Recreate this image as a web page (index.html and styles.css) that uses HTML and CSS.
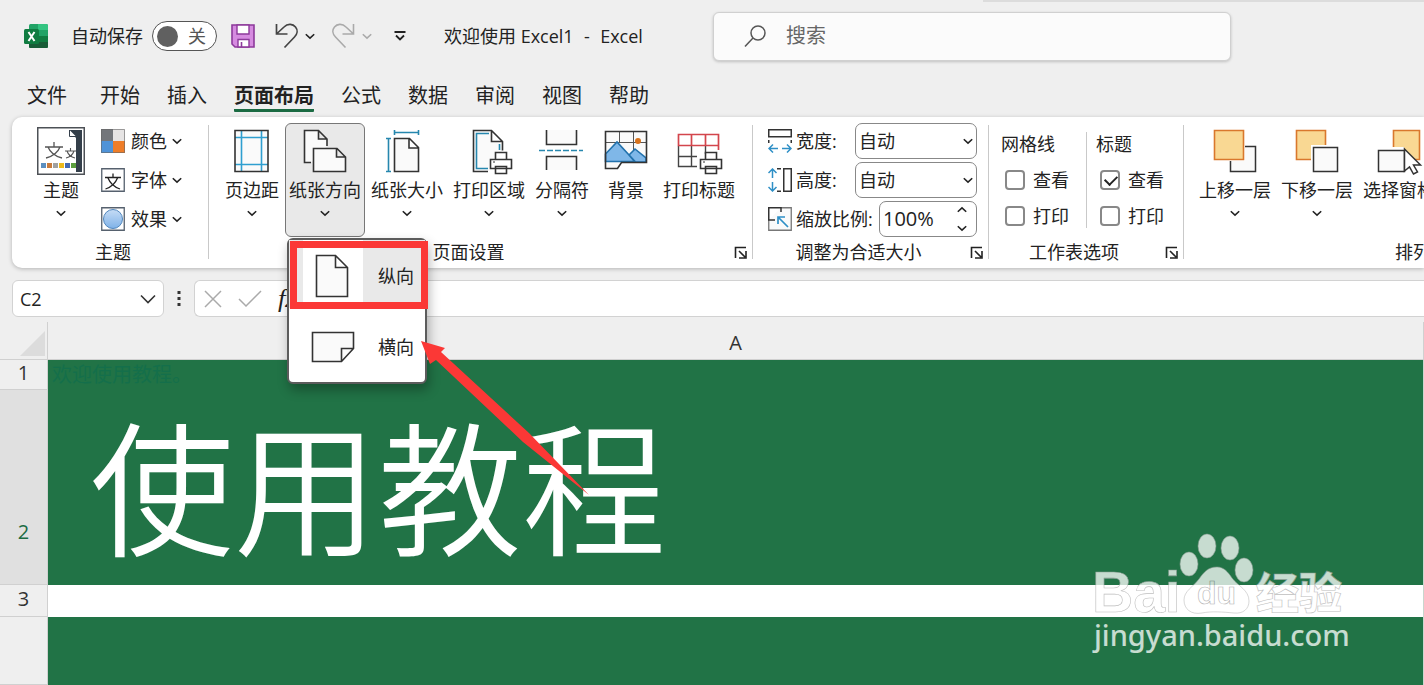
FILE: index.html
```html
<!DOCTYPE html>
<html lang="zh-CN">
<head>
  <meta charset="UTF-8">
  <meta name="viewport" content="width=device-width, initial-scale=1.0">
  <title>欢迎使用 Excel1 - Excel</title>
  <link rel="stylesheet" href="styles.css">
</head>
<body>
  <!-- shared icons -->
  <svg class="defs" aria-hidden="true">
    <symbol id="chev" viewBox="0 0 10 10"><path d="M1.5 3.500L5 6.800L8.500 3.500" fill="none" stroke="currentColor" stroke-width="1.300"/></symbol>
    <symbol id="launch" viewBox="0 0 14 14"><path d="M1.5 12V1.5H12M5 5l6 6M12 5v7H5" fill="none" stroke="#222" stroke-width="1.6"/></symbol>
    <symbol id="printer" viewBox="0 0 24 24"><path d="M6.500 8V1.500h11V8M1.500 8.500h21v9h-21zM6.500 15.500h11v7h-11z" fill="#fff" stroke="#333" stroke-width="1.600"/><path d="M4 11h2" stroke="#333"/></symbol>
  </svg>

  <header class="titlebar">
    <div class="quick">
      <svg class="logo" width="24" height="24" viewBox="0 0 24 24">
        <rect x="5" y="0" width="19" height="24" rx="1.500" fill="#21a366"/>
        <path d="M14 0h8.500a1.500 1.500 0 0 1 1.500 1.500V6H14z" fill="#33c481"/>
        <path d="M5 6h9v6H5z" fill="#107c41"/>
        <path d="M14 12h10v6H14z" fill="#107c41"/>
        <path d="M5 12h9v6h10v4.500a1.500 1.500 0 0 1-1.500 1.500h-16A1.500 1.500 0 0 1 5 22.500z" fill="#185c37"/>
        <rect x="0" y="5" width="15" height="15" rx="1.500" fill="#107c41"/>
        <path d="M4.500 8l6 9M10.500 8l-6 9" stroke="#fff" stroke-width="2"/>
      </svg>
      <span class="autosave" id="autosaveLabel">自动保存</span>
      <button class="toggle" role="switch" aria-checked="false" aria-labelledby="autosaveLabel"><i></i>关</button>
      <button class="tool" aria-label="保存">
        <svg width="24" height="24" viewBox="0 0 24 24">
          <path d="M1 1h22v22H4l-3-3z" fill="#d68be0" stroke="#8d3a9b" stroke-width="1.600"/>
          <path d="M6 1h12v9H6zM7 15.500h11V23H7z" fill="#fff" stroke="#8d3a9b" stroke-width="1.400"/>
          <path d="M10.500 18v5" stroke="#8d3a9b" stroke-width="1.600"/>
        </svg>
      </button>
      <button class="tool undo" aria-label="撤消">
        <svg width="24" height="26" viewBox="0 0 24 26"><path d="M1.500 1v10h11M2 10.500L9 4c4-4 9-3 11.500 0s2 7-1 10L9.500 24.500" fill="none" stroke="#444" stroke-width="1.700"/></svg>
        <svg width="12" height="12"><use href="#chev"/></svg>
      </button>
      <button class="tool redo" aria-label="恢复">
        <svg width="24" height="26" viewBox="0 0 24 26"><path d="M21.500 1v10h-11M21 10.500L14 4c-4-4-9-3-11.500 0s-2 7 1 10L13.500 24.500" fill="none" stroke="#aaa" stroke-width="1.600"/></svg>
        <svg width="12" height="12"><use href="#chev"/></svg>
      </button>
      <button class="tool custom" aria-label="自定义快速访问工具栏">
        <svg width="12" height="12" viewBox="0 0 12 12"><path d="M.5 2h11M2 5.500l4 4 4-4" fill="none" stroke="#222" stroke-width="1.800"/></svg>
      </button>
      <span class="doc-title">欢迎使用 Excel1 <span class="dash">&nbsp;-&nbsp;</span> Excel</span>
    </div>
    <label class="search">
      <svg width="24" height="24" viewBox="0 0 24 24"><circle cx="14" cy="9" r="7" fill="none" stroke="#555" stroke-width="1.500"/><path d="M9 14l-8 8.500" stroke="#555" stroke-width="1.500"/></svg>
      <input type="text" placeholder="搜索" aria-label="搜索">
    </label>
  </header>

  <nav class="tabs">
    <a href="#" class="file">文件</a>
    <a href="#">开始</a>
    <a href="#">插入</a>
    <a href="#" class="active">页面布局</a>
    <a href="#">公式</a>
    <a href="#">数据</a>
    <a href="#">审阅</a>
    <a href="#">视图</a>
    <a href="#">帮助</a>
  </nav>

  <section class="ribbon">
    <div class="group theme">
      <div class="items">
        <button class="big">
          <svg width="48" height="48" viewBox="0 0 48 48">
            <rect x=".75" y=".75" width="46.500" height="46.500" fill="#fff" stroke="#4d5156" stroke-width="1.500"/>
            <path d="M39 3h6v42h-6zM32 3h7v8z" fill="#343f4a"/>
            <path d="M32.500 3v6.500H39" fill="#fff" stroke="#343f4a"/>
            <path d="M8 20h18M17 15v5M11 20c2 5 6 9 14 11M23 20c-2 5-6 9-14 11" fill="none" stroke="#555" stroke-width="1.300"/>
            <path d="M28 24h11M33.500 21v3M30 24c1 3 4 6 8 7M37 24c-1 3-4 6-8 7" fill="none" stroke="#555" stroke-width="1.100"/>
            <path d="M4 36h5v5H4z" fill="#5b8fc0"/><path d="M10 36h5v5h-5z" fill="#c97b3c"/><path d="M16 36h5v5h-5z" fill="#a0a0a0"/>
            <path d="M22 36h5v5h-5z" fill="#edb91c"/><path d="M28 36h5v5h-5z" fill="#4468b3"/><path d="M34 36h5v5h-5z" fill="#5b9e3d"/>
          </svg>
          <span>主题</span>
          <svg class="chev" width="12" height="12"><use href="#chev"/></svg>
        </button>
        <div class="stack">
          <button class="small">
            <svg width="24" height="24" viewBox="0 0 24 24"><path d="M0 0h12v12H0z" fill="#73767b"/><path d="M12 0h12v12H12z" fill="#e6e4e4"/><path d="M0 12h12v12H0z" fill="#4f93d8"/><path d="M12 12h12v12H12z" fill="#ee7d28"/><path d="M.5.5h23v23H.5z" fill="none" stroke="#666" stroke-opacity=".6"/></svg>
            颜色<svg width="12" height="12"><use href="#chev"/></svg>
          </button>
          <button class="small">
            <svg width="24" height="24" viewBox="0 0 24 24"><path d="M.75.75h22.500v22.500H.75z" fill="#fff" stroke="#56616e" stroke-width="1.300"/><path d="M4 9.500h16M12 5.500v4M7 10c2 5 6 9 12 11M16.500 10c-2 5-6 9-12 11" fill="none" stroke="#222" stroke-width="1.300"/></svg>
            字体<svg width="12" height="12"><use href="#chev"/></svg>
          </button>
          <button class="small">
            <svg width="24" height="24" viewBox="0 0 24 24"><defs><linearGradient id="ball" x2="0" y2="1"><stop stop-color="#c6dcf5"/><stop offset="1" stop-color="#7fb2e8"/></linearGradient></defs><path d="M.75.75h22.500v22.500H.75z" fill="#fff" stroke="#56616e" stroke-width="1.300"/><circle cx="12" cy="12" r="9.500" fill="url(#ball)" stroke="#5187bd"/></svg>
            效果<svg width="12" height="12"><use href="#chev"/></svg>
          </button>
        </div>
      </div>
      <div class="caption"><span>主题</span></div>
    </div>
    <div class="sep"></div>

    <div class="group page">
      <div class="items">
        <button class="big">
          <svg width="48" height="48" viewBox="0 0 48 48"><path d="M7 3.500h33v41H7z" fill="#fafafa"/><path d="M13.500 4v40M33.500 4v40M7 10.500h33M7 37.500h33" stroke="#2f9fd0" stroke-width="1.600"/><path d="M7 3.500h33v41H7z" fill="none" stroke="#333" stroke-width="1.600"/></svg>
          <span>页边距</span>
          <svg class="chev" width="12" height="12"><use href="#chev"/></svg>
        </button>
        <div class="drop">
          <button class="big pressed" aria-expanded="true">
            <svg width="48" height="48" viewBox="0 0 48 48"><path d="M10 35.500H3.500v-32h14l8.500 8.500v7M17.500 3.500V12H26" fill="#fafafa" stroke="#333" stroke-width="1.600"/><path d="M12.500 21.500h23.500l8.500 8.500v14.500h-32zM35.500 21.500V30h9" fill="#fafafa" stroke="#333" stroke-width="1.600"/></svg>
            <span>纸张方向</span>
            <svg class="chev" width="12" height="12"><use href="#chev"/></svg>
          </button>
          <div class="menu">
            <button class="option hover">
              <span class="pic"><svg width="48" height="48" viewBox="0 0 48 48"><path d="M7.500 3.500h19l12 12v29h-31zM26.500 3.500v12h12" fill="#fafafa" stroke="#333" stroke-width="1.600"/></svg></span>纵向
            </button>
            <button class="option">
              <span class="pic"><svg width="48" height="48" viewBox="0 0 48 48"><path d="M3.500 9.500h41v16l-12 13h-29zM32.500 38.500v-13h12" fill="#fafafa" stroke="#333" stroke-width="1.600"/></svg></span>横向
            </button>
            <div class="mark"></div>
            <svg class="arrow" width="170" height="155" viewBox="0 0 170 155"><path d="M0 0L24 7L20 11L108 92L168 154L102 101L15 19L9 23Z" fill="#fb3836"/></svg>
          </div>
        </div>
        <button class="big">
          <svg width="48" height="48" viewBox="0 0 48 48"><path d="M11.500 11.500h15l9 9v24h-24zM26 11.500v9.500h9.500" fill="#fafafa" stroke="#333" stroke-width="1.600"/><path d="M11.500 5.500h24M11.500 3v5M35.500 3v5M5.500 11.500v33M3 11.500h5M3 44.500h5" stroke="#2687ae" stroke-width="1.600"/></svg>
          <span>纸张大小</span>
          <svg class="chev" width="12" height="12"><use href="#chev"/></svg>
        </button>
        <button class="big">
          <svg width="48" height="48" viewBox="0 0 48 48"><path d="M23 44.500H8.500v-41h18l11 11v9M26.500 3.500v11h11" fill="#fafafa" stroke="#333" stroke-width="1.600"/><path d="M23 41.500H11.500v-35H24M34.500 17v6" fill="none" stroke="#2687ae" stroke-width="1.600"/><svg x="24" y="24" width="24" height="24"><use href="#printer"/></svg></svg>
          <span>打印区域</span>
          <svg class="chev" width="12" height="12"><use href="#chev"/></svg>
        </button>
        <button class="big">
          <svg width="48" height="48" viewBox="0 0 48 48"><path d="M8.500 3v14.500h30V3M8.500 43V29.500h30V43" fill="#fafafa" stroke="#333" stroke-width="1.600"/><path d="M1 23.500h44" stroke="#2687ae" stroke-width="1.500" stroke-dasharray="6 2"/></svg>
          <span>分隔符</span>
          <svg class="chev" width="12" height="12"><use href="#chev"/></svg>
        </button>
        <button class="big">
          <svg width="48" height="48" viewBox="0 0 48 48"><path d="M3.500 4.500h41v31h-25l-4 6h-12z" fill="#fafafa"/><path d="M17.500 5v11M31.500 5v20M3 15.500h41" stroke="#555"/><path d="M3.500 27l11.500-12 18 19.500h-29.500zM27 28l6-6 11 9v4H33z" fill="#7fb7e8" stroke="#2272ad" stroke-width="1.600"/><circle cx="36" cy="14" r="3" fill="#d9731c"/><path d="M3.500 4.500h41v31h-25l-4 6h-12z" fill="none" stroke="#333" stroke-width="1.600"/></svg>
          <span>背景</span>
        </button>
        <button class="big">
          <svg width="48" height="48" viewBox="0 0 48 48"><path d="M3.500 19v20.500H22M16.500 19v20M3.500 29.500H22M30.500 19v8" fill="none" stroke="#444" stroke-width="1.400"/><path d="M3.500 7.500h40v11h-40zM16.500 8v10M30.500 8v10M43.500 18v5" fill="#fff" stroke="#d3454c" stroke-width="1.700"/><svg x="24" y="24" width="24" height="24"><use href="#printer"/></svg></svg>
          <span>打印标题</span>
        </button>
      </div>
      <div class="caption"><span>页面设置</span><button aria-label="页面设置对话框"><svg width="14" height="14"><use href="#launch"/></svg></button></div>
    </div>
    <div class="sep"></div>

    <div class="group scale">
      <div class="fields">
        <div class="field">
          <svg width="24" height="24" viewBox="0 0 24 24"><path d="M.75.75h22.500v7H.75zM.75 11v3M23.250 11v3" fill="none" stroke="#333" stroke-width="1.500"/><path d="M10 19.500H1M5 15.500l-4 4 4 4M14 19.500h9M19 15.500l4 4-4 4" fill="none" stroke="#2e8fc6" stroke-width="1.500"/></svg>
          <label for="w">宽度:</label>
          <span class="select"><select id="w"><option>自动</option></select><svg width="12" height="12"><use href="#chev"/></svg></span>
        </div>
        <div class="field">
          <svg width="24" height="24" viewBox="0 0 24 24"><path d="M15.750.75h7.500v22.500h-7.500zM9 .75h4M9 23.250h4" fill="none" stroke="#333" stroke-width="1.500"/><path d="M4.500 10V1M.5 5l4-4 4 4M4.500 14v9M.5 19l4 4 4-4" fill="none" stroke="#2e8fc6" stroke-width="1.500"/></svg>
          <label for="h">高度:</label>
          <span class="select"><select id="h"><option>自动</option></select><svg width="12" height="12"><use href="#chev"/></svg></span>
        </div>
        <div class="field">
          <svg width="24" height="24" viewBox="0 0 24 24"><path d="M13 .75h10.250v22.500H.75V13" fill="#fafafa" stroke="#777" stroke-width="1.300"/><path d="M13 5V.75H.75V13H7" fill="none" stroke="#333" stroke-width="1.500"/><path d="M20 20L10 10M10 17v-7h7" fill="none" stroke="#2e8fc6" stroke-width="1.700"/></svg>
          <label for="s">缩放比例:</label>
          <span class="spin"><input id="s" type="text" value="100%"><span class="steps"><svg class="up" width="12" height="12"><use href="#chev"/></svg><svg width="12" height="12"><use href="#chev"/></svg></span></span>
        </div>
      </div>
      <div class="caption"><span>调整为合适大小</span><button aria-label="调整大小对话框"><svg width="14" height="14"><use href="#launch"/></svg></button></div>
    </div>
    <div class="sep"></div>

    <div class="group sheet-opts">
      <div class="items">
        <div class="checks">
          <h4>网格线</h4>
          <label><input type="checkbox">查看</label>
          <label><input type="checkbox">打印</label>
        </div>
        <div class="checks">
          <h4>标题</h4>
          <label><input type="checkbox" checked>查看</label>
          <label><input type="checkbox">打印</label>
        </div>
      </div>
      <div class="caption"><span>工作表选项</span><button aria-label="工作表选项对话框"><svg width="14" height="14"><use href="#launch"/></svg></button></div>
    </div>
    <div class="sep"></div>

    <div class="group arrange">
      <div class="items">
        <button class="big">
          <svg width="48" height="48" viewBox="0 0 48 48"><path d="M19.500 19.500h25v25h-25z" fill="#fafafa" stroke="#333" stroke-width="1.500"/><path d="M1 1h33v33H1z" fill="#fff"/><path d="M3.500 3.500h29v29h-29z" fill="#f9d893" stroke="#d9782d" stroke-width="1.600"/></svg>
          <span>上移一层</span>
          <svg class="chev" width="12" height="12"><use href="#chev"/></svg>
        </button>
        <button class="big">
          <svg width="48" height="48" viewBox="0 0 48 48"><path d="M3.500 3.500h29v29h-29z" fill="#f9d893" stroke="#d9782d" stroke-width="1.600"/><path d="M18 18h28v28H18z" fill="#fff"/><path d="M20.500 20.500h24v24h-24z" fill="#fafafa" stroke="#333" stroke-width="1.500"/></svg>
          <span>下移一层</span>
          <svg class="chev" width="12" height="12"><use href="#chev"/></svg>
        </button>
        <button class="big">
          <svg width="48" height="48" viewBox="0 0 48 48"><path d="M18.500 3.500h26v29h-26z" fill="#f9d893" stroke="#d9782d" stroke-width="1.600"/><path d="M2 20h27v27H2z" fill="#fff"/><path d="M3.500 23.500h26v21h-26z" fill="#fafafa" stroke="#333" stroke-width="1.500"/><path d="M29.500 22v22l5-4 4 7 4-2-4-7h7z" fill="#fff" stroke="#333" stroke-width="1.500"/></svg>
          <span>选择窗格</span>
        </button>
      </div>
      <div class="caption"><span>排列</span></div>
    </div>
  </section>

  <div class="formula-row">
    <div class="namebox"><input type="text" value="C2" aria-label="名称框"><svg width="16" height="16" viewBox="0 0 16 16"><path d="M1 4.500l7 7 7-7" fill="none" stroke="#333" stroke-width="1.600"/></svg></div>
    <svg class="dots" width="4" height="16" viewBox="0 0 4 16"><path d="M.5 0h3v3h-3zM.5 6h3v3h-3zM.5 12h3v3h-3z" fill="#333"/></svg>
    <div class="formula">
      <svg width="18" height="18" viewBox="0 0 18 18"><path d="M1 1l16 16M17 1L1 17" stroke="#aaa" stroke-width="1.500"/></svg>
      <svg width="24" height="18" viewBox="0 0 24 18"><path d="M1 9l7 7L23 1" fill="none" stroke="#aaa" stroke-width="1.500"/></svg>
      <em>fx</em>
      <input type="text" aria-label="编辑栏">
    </div>
  </div>

  <main class="sheet">
    <table>
      <thead>
        <tr><th class="corner"><svg width="25" height="25" viewBox="0 0 25 25"><path d="M25 0v25H0z" fill="#dcdcdc"/></svg></th><th class="col">A</th></tr>
      </thead>
      <tbody>
        <tr class="r1"><th>1</th><td>欢迎使用教程。</td></tr>
        <tr class="r2"><th>2</th><td>使用教程</td></tr>
        <tr class="r3"><th>3</th><td></td></tr>
        <tr class="r4"><th></th><td></td></tr>
      </tbody>
    </table>
    <svg class="watermark" width="260" height="125" viewBox="0 0 260 125">
      <g fill="#fff" stroke="#aaa" stroke-width=".6">
        <text class="wm-bai" x="2" y="82">Bai</text>
        <ellipse cx="99" cy="34" rx="9" ry="12"/>
        <ellipse cx="117" cy="16" rx="9" ry="12"/>
        <ellipse cx="140" cy="18" rx="9" ry="12"/>
        <ellipse cx="154" cy="40" rx="9" ry="12"/>
        <path d="M127 37c7 0 11 5 15 11 6 8 17 12 17 23 0 8-6 13-15 12-11-1-22-2-32 0-11 2-18-4-18-13 0-9 9-13 15-21 5-7 9-12 18-12z"/>
        <text class="wm-du" x="107" y="74">du</text>
        <text class="wm-jy" x="166" y="79">经验</text>
      </g>
      <text class="wm-url" x="4" y="116" fill="#fff">jingyan.baidu.com</text>
    </svg>
  </main>
</body>
</html>
```
FILE: styles.css
```css
* { box-sizing: border-box; margin: 0; padding: 0; }
html, body { height: 100%; }
body { display: flex; flex-direction: column; overflow: hidden; position: relative; background: #efefef; color: #222; font-family: "Open Sans", "Noto Sans CJK SC", sans-serif; font-size: 18px; line-height: 24px; }
body::before { content: ""; position: absolute; top: 0; right: 0; width: 31%; height: 2px; background: #dcdcdc; }
button, input, select { font: inherit; color: inherit; background: none; border: none; outline: none; }
button { cursor: pointer; }
svg { display: block; flex: none; }
a { color: inherit; text-decoration: none; }
.defs { position: absolute; width: 0; height: 0; }

/* title bar */
.titlebar { display: flex; align-items: center; flex: none; height: 72px; }
.quick { display: flex; align-items: center; flex: none; width: 50%; padding-left: 24px; white-space: nowrap; }
.autosave { margin: 0 9px 0 23px; }
.toggle { display: flex; align-items: center; gap: 10px; width: 65px; height: 30px; padding-left: 4px; margin-right: 14px; background: #fff; border: 1px solid #555; border-radius: 15px; color: #555; }
.toggle i { width: 21px; height: 21px; border-radius: 50%; background: #606060; }
.tool { display: flex; align-items: center; gap: 5px; }
.undo { margin-left: 20px; }
.redo { margin-left: 16px; color: #aaa; }
.custom { margin-left: 21px; }
.doc-title { margin-left: 38px; }
.dash { margin: 0 1px; }
.search { display: flex; align-items: center; gap: 18px; flex: 0 1 518px; height: 49px; margin-left: 1px; padding-left: 30px; background: #fbfbfb; border: 1px solid #d0d0d0; border-radius: 6px; box-shadow: 0 1px 3px rgba(0,0,0,0.2); font-size: 20px; }
.search input { flex: 1; min-width: 0; }
.search input::placeholder { color: #666; opacity: 1; }

/* tabs */
.tabs { display: flex; flex: none; gap: 27px; height: 45px; padding: 8px 27px 0; font-size: 20px; line-height: 32px; }
.tabs a { height: 32px; }
.tabs .file { margin-right: 6px; }
.tabs .active { font-weight: bold; border-bottom: 3px solid #1b6b43; border-radius: 1px; }

/* ribbon */
.ribbon { display: flex; flex: none; height: 151px; margin-left: 12px; background: #fff; border-radius: 10px 0 0 10px; box-shadow: 0 1px 4px rgba(0,0,0,0.25); white-space: nowrap; }
.sep { flex: none; width: 1px; margin: 8px 0 9px; background: #c9c9c9; }
.group { display: flex; flex-direction: column; flex: none; justify-content: space-between; padding: 6px 0 4px; }
.items { display: flex; gap: 2px; }
.caption { display: flex; align-items: center; height: 24px; }
.caption span { flex: 1; text-align: center; }
.caption button { width: 14px; height: 14px; margin: 2px 4px 0 6px; }
.big { display: flex; flex-direction: column; align-items: center; min-width: 62px; height: 114px; padding: 3px; border: 1px solid transparent; border-radius: 6px; }
.big span { margin-top: 3px; }
.big .chev { margin-top: 5px; }
.big.pressed { background: #e9e9e9; border-color: #777; }
.theme { width: 196px; }
.theme .items { padding-left: 18px; gap: 9px; }
.theme .caption { padding-left: 6px; }
.stack { display: flex; flex-direction: column; gap: 3px; }
.small { display: flex; align-items: center; gap: 6px; height: 36px; }
.small svg:last-child { margin-left: -2px; }
.page { width: 543px; }
.page .items { padding-left: 12px; }

/* orientation menu */
.drop { position: relative; }
.menu { position: absolute; left: 2px; top: 115px; z-index: 10; width: 140px; background: #fff; border: 2px solid #5c5c5c; border-radius: 6px; box-shadow: 2px 6px 12px rgba(0,0,0,0.3); }
.option { display: flex; align-items: center; gap: 15px; width: 100%; height: 71px; padding-left: 14px; }
.option.hover { background: linear-gradient(#e9e9e9, #e9e9e9) no-repeat; background-size: 100% 68px; }
.pic { display: flex; justify-content: center; align-items: center; width: 60px; height: 100%; background: #fff; }
.mark { position: absolute; left: 1px; top: 1px; width: 138px; height: 68px; border: 7px solid #fb3836; }
.arrow { position: absolute; left: 132px; top: 101px; }

/* scale to fit */
.scale { padding-left: 15px; }
.scale .caption { margin-left: -15px; }
.fields { display: flex; flex-direction: column; gap: 3px; min-width: 209px; margin-right: 11px; }
.field { display: flex; align-items: center; gap: 4px; }
.select, .spin { position: relative; margin-left: auto; height: 36px; border: 1px solid #888; border-radius: 7px; }
.select { width: 122px; }
.select select { width: 100%; height: 100%; padding-left: 3px; appearance: none; }
.select svg { position: absolute; right: 2px; top: 11px; }
.spin { display: flex; align-items: center; width: 98px; padding: 0 8px 0 3px; font-size: 20px; }
.spin input { flex: 1; min-width: 0; }
.steps { display: flex; flex-direction: column; gap: 6px; }
.up { transform: rotate(180deg); }

/* sheet options */
.sheet-opts { width: 194px; }
.sheet-opts .items { padding: 9px 0 0 12px; gap: 0; }
.checks { display: flex; flex-direction: column; width: 85px; height: 96px; gap: 12px; }
.checks + .checks { padding-left: 9px; border-left: 1px solid #c9c9c9; }
.checks h4 { font-weight: normal; }
.checks label { display: flex; align-items: center; gap: 8px; padding-left: 4px; }
.checks input { position: relative; width: 20px; height: 20px; border: 2px solid #888; border-radius: 4px; appearance: none; }
.checks input:checked::after { content: ""; position: absolute; left: 3px; top: 3px; width: 10px; height: 6px; border: solid #222; border-width: 0 0 2px 2px; transform: rotate(-45deg); }
.arrange { flex: 1; min-width: 0; overflow: hidden; }
.arrange .items { padding-left: 11px; }
.arrange .big { flex: none; }
.arrange .caption { width: 458px; }

/* formula bar */
.formula-row { display: flex; align-items: center; flex: none; margin: 12px 0 5px 12px; }
.namebox, .formula { display: flex; align-items: center; height: 37px; background: #fff; border: 1px solid #d2d2d2; border-radius: 6px; }
.namebox { width: 152px; padding: 0 7px; }
.namebox input { flex: 1; min-width: 0; }
.dots { margin: 0 13px; }
.formula { flex: 1; gap: 16px; padding-left: 9px; border-right: none; border-radius: 6px 0 0 6px; }
.formula em { font-family: "Liberation Serif", serif; font-size: 26px; }
.formula input { flex: 1; }

/* sheet */
.sheet { position: relative; flex: 1; }
.sheet table { width: 100%; height: 100%; border-collapse: separate; border-spacing: 0; table-layout: fixed; }
.sheet th { width: 48px; padding-bottom: 3px; font-size: 20px; font-weight: normal; border: solid #d0d0d0; border-width: 0 1px 1px 0; color: #333; }
.sheet thead tr { height: 38px; }
.sheet .corner { padding: 0; }
.sheet .corner svg { margin: 6px 0 0 20px; }
.sheet .col { width: auto; padding: 4px 0 0; }
.sheet td { background: #217346; border-right: 1px solid #c9d6ce; }
.sheet .r1 { height: 30px; }
.sheet .r1 td { padding-left: 4px; font-size: 20px; color: #146f4b; }
.sheet .r2 { height: 195px; }
.sheet .r2 th { padding-bottom: 40px; vertical-align: bottom; background: #e0e0e0; color: #1b6b43; }
.sheet .r2 td { padding: 2px 0 0 42px; font-size: 144px; font-weight: 350; line-height: 190px; color: #fff; }
.sheet .r3 { height: 32px; }
.sheet .r3 td { background: #fff; }

.watermark { position: absolute; right: 74px; top: 208px; opacity: 0.75; }
.wm-bai { font: bold 57px "Liberation Sans", sans-serif; }
.wm-du { font: bold 32px "Liberation Sans", sans-serif; stroke: #999; }
.wm-jy { font: 900 43px "Noto Sans CJK SC", sans-serif; }
.wm-url { font: 500 29px "Noto Sans", sans-serif; }
```
